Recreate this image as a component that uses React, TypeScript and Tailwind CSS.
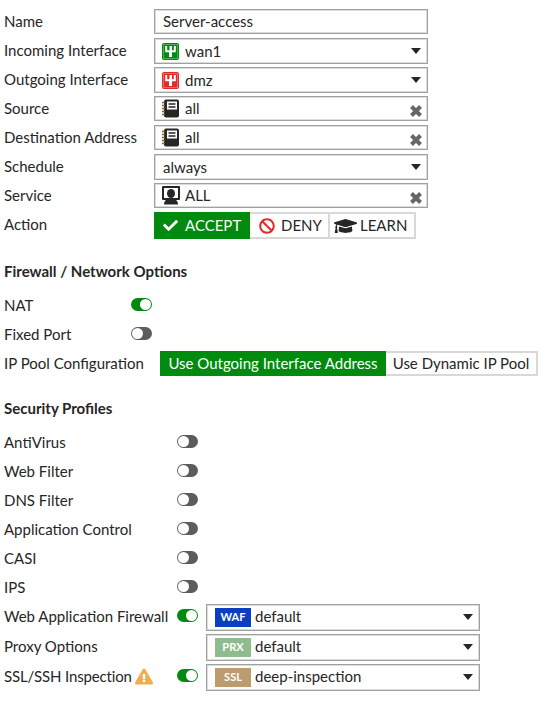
import type { ReactNode } from "react";
import { FaBan, FaCheck, FaExclamationTriangle, FaGraduationCap } from "react-icons/fa";

function PortIcon({ color }: { color: string }) {
    return (
        <svg width="17" height="17" viewBox="0 0 17 17" className="shrink-0">
            <rect x="0" y="0" width="17" height="17" rx="2" fill={color} />
            <rect x="1.5" y="1.5" width="14" height="14" fill="none" stroke="#fff" strokeOpacity="0.3" />
            <path d="M3.2 3v6.2h3.8V14h3V9.2h3.8V3h-2v4.2h-1.8V3H7.5v4.2H5.2V3z" fill="#fff" />
        </svg>
    );
}

function AddressIcon() {
    return (
        <svg width="17" height="19" viewBox="0 0 17 19" className="shrink-0">
            <rect x="2" y="0.5" width="15" height="18" rx="2" fill="#262626" />
            <path d="M0 3.5h3M0 6.5h3M0 9.5h3M0 12.5h3M0 15.5h3" stroke="#8a5a2b" strokeWidth="1.4" />
            <rect x="5" y="2.5" width="10" height="8" fill="#fff" />
            <path d="M6.5 5h7M6.5 8h7" stroke="#262626" strokeWidth="1.4" />
        </svg>
    );
}

function ServiceIcon() {
    return (
        <svg width="18" height="19" viewBox="0 0 18 19" className="shrink-0">
            <rect x="0" y="0" width="18" height="14" rx="1" fill="#262626" />
            <rect x="2" y="2" width="14" height="10" fill="#fff" />
            <ellipse cx="9" cy="7.5" rx="4" ry="4.5" fill="#262626" />
            <path d="M2 18.5c0-4 3-6 7-6s7 2 7 6z" fill="#262626" />
        </svg>
    );
}

function Caret() {
    return (
        <svg width="10" height="6" viewBox="0 0 10 6" className="shrink-0">
            <polygon points="0,0 10,0 5,6" fill="#262626" />
        </svg>
    );
}

function ClearIcon() {
    return (
        <svg width="14" height="14" viewBox="0 0 14 14" className="shrink-0 mt-[5px]">
            <path d="M2.5 2.5l9 9M11.5 2.5l-9 9" stroke="#666" strokeWidth="4" />
        </svg>
    );
}

function Toggle({ on }: { on?: boolean }) {
    return (
        <div
            className={
                on
                    ? "w-[21px] h-[13px] rounded-full bg-[#008a0e] flex items-center justify-end pr-[1px]"
                    : "w-[21px] h-[13px] rounded-full bg-[#5c5c5c] flex items-center justify-start pl-[1px]"
            }
        >
            <div className="w-[11px] h-[11px] rounded-full bg-white" />
        </div>
    );
}

function Row({ label, children }: { label: string; children: ReactNode }) {
    return (
        <div className="flex h-[29px]">
            <div className="w-[150px] h-[25px] flex items-center shrink-0">{label}</div>
            {children}
        </div>
    );
}

function Box({ children, tall, icon }: { children: ReactNode; tall?: boolean; icon?: boolean }) {
    return (
        <div
            className={
                (tall
                    ? "w-[274px] h-[26px] border border-[#a0a0a0] shadow-[inset_0_0_0_1px_#dcdcdc] flex items-center pr-[6px] gap-[6px]"
                    : "w-[274px] h-[25px] border border-[#a0a0a0] shadow-[inset_0_0_0_1px_#dcdcdc] flex items-center pr-[4px] gap-[6px]") +
                (icon ? " pl-[7px]" : " pl-[8px]")
            }
        >
            {children}
        </div>
    );
}

function ToggleRow({ label }: { label: string }) {
    return (
        <div className="flex items-center h-[29px]">
            <div className="w-[173px] shrink-0">{label}</div>
            <div className="-mt-[3px]">
                <Toggle />
            </div>
        </div>
    );
}

function ProfileRow({
    label,
    on,
    warn,
    tag,
    tagClass,
    value,
}: {
    label: string;
    on?: boolean;
    warn?: boolean;
    tag: string;
    tagClass: string;
    value: string;
}) {
    return (
        <div className="flex items-center h-[30px]">
            <div className="w-[173px] shrink-0 flex items-center -mt-[2px]">
                <span className={warn ? "tracking-[-0.16px]" : ""}>{label}</span>
                {warn && <FaExclamationTriangle className="text-[#f0ad4e] w-[18px] h-[17px] ml-[3px]" />}
            </div>
            <div className="w-[29px] shrink-0 -mt-[3px]">{on && <Toggle on />}</div>
            <div className="w-[274px] h-[27px] border border-[#a0a0a0] shadow-[inset_0_0_0_1px_#dcdcdc] flex items-center pl-[8px] pr-[6px]">
                <div className={tagClass}>{tag}</div>
                <span className="ml-[4px] flex-1 -mt-[2px]">{value}</span>
                <Caret />
            </div>
        </div>
    );
}

export default function App() {
    return (
        <div className="w-[548px] h-[701px] bg-white pl-[4px] pt-[9px] text-[15px] text-[#262626] font-['Lato',sans-serif] overflow-hidden">
            <Row label="Name">
                <Box>Server-access</Box>
            </Row>
            <Row label="Incoming Interface">
                <Box tall icon>
                    <PortIcon color="#008a0e" />
                    <span className="flex-1">wan1</span>
                    <Caret />
                </Box>
            </Row>
            <Row label="Outgoing Interface">
                <Box tall icon>
                    <PortIcon color="#e02b27" />
                    <span className="flex-1">dmz</span>
                    <Caret />
                </Box>
            </Row>
            <Row label="Source">
                <Box icon>
                    <AddressIcon />
                    <span className="flex-1">all</span>
                    <ClearIcon />
                </Box>
            </Row>
            <Row label="Destination Address">
                <Box icon>
                    <AddressIcon />
                    <span className="flex-1">all</span>
                    <ClearIcon />
                </Box>
            </Row>
            <Row label="Schedule">
                <Box tall>
                    <span className="flex-1">always</span>
                    <Caret />
                </Box>
            </Row>
            <Row label="Service">
                <Box icon>
                    <ServiceIcon />
                    <span className="flex-1 -ml-[1px]">ALL</span>
                    <ClearIcon />
                </Box>
            </Row>
            <div className="flex h-[27px]">
                <div className="w-[150px] h-[25px] flex items-center shrink-0">Action</div>
                <div className="flex">
                    <div className="w-[96px] bg-[#008a0e] text-white flex items-center pl-[9px] gap-[7px]">
                        <FaCheck className="w-[15px] h-[15px]" />
                        ACCEPT
                    </div>
                    <div className="w-[80px] border-y-2 border-r-2 border-[#d8d8d8] flex items-center pl-[9px] gap-[6px]">
                        <FaBan className="text-[#e02b27] w-[16px] h-[16px]" />
                        DENY
                    </div>
                    <div className="w-[86px] border-y-2 border-r-2 border-[#d8d8d8] flex items-center pl-[4px] gap-[3px]">
                        <FaGraduationCap className="w-[23px] h-[20px]" />
                        LEARN
                    </div>
                </div>
            </div>

            <div className="font-bold mt-[22px] h-[20px] leading-[20px]">Firewall / Network Options</div>

            <div className="mt-[10px]">
                <div className="flex items-center h-[29px]">
                    <div className="w-[127px] shrink-0">NAT</div>
                    <div className="-mt-[3px]">
                        <Toggle on />
                    </div>
                </div>
                <div className="flex items-center h-[29px]">
                    <div className="w-[127px] shrink-0">Fixed Port</div>
                    <div className="-mt-[3px]">
                        <Toggle />
                    </div>
                </div>
                <div className="flex items-center h-[25px] mt-[2px]">
                    <div className="w-[156px] shrink-0">IP Pool Configuration</div>
                    <div className="w-[226px] h-[25px] bg-[#008a0e] text-white flex items-center justify-center">
                        Use Outgoing Interface Address
                    </div>
                    <div className="w-[152px] h-[25px] border-y-2 border-r-2 border-[#d8d8d8] flex items-center justify-center">
                        Use Dynamic IP Pool
                    </div>
                </div>
            </div>

            <div className="font-bold mt-[22px] h-[20px] leading-[20px]">Security Profiles</div>

            <div className="mt-[10px]">
                <ToggleRow label="AntiVirus" />
                <ToggleRow label="Web Filter" />
                <ToggleRow label="DNS Filter" />
                <ToggleRow label="Application Control" />
                <ToggleRow label="CASI" />
                <ToggleRow label="IPS" />
                <ProfileRow
                    label="Web Application Firewall"
                    on
                    tag="WAF"
                    tagClass="w-[36px] h-[19px] bg-[#0b3fc0] text-white text-[11px] font-bold flex items-center justify-center"
                    value="default"
                />
                <ProfileRow
                    label="Proxy Options"
                    tag="PRX"
                    tagClass="w-[36px] h-[19px] bg-[#8fbc8f] text-white text-[11px] font-bold flex items-center justify-center"
                    value="default"
                />
                <ProfileRow
                    label="SSL/SSH Inspection"
                    on
                    warn
                    tag="SSL"
                    tagClass="w-[36px] h-[19px] bg-[#bc9c6e] text-white text-[11px] font-bold flex items-center justify-center"
                    value="deep-inspection"
                />
            </div>
        </div>
    );
}
